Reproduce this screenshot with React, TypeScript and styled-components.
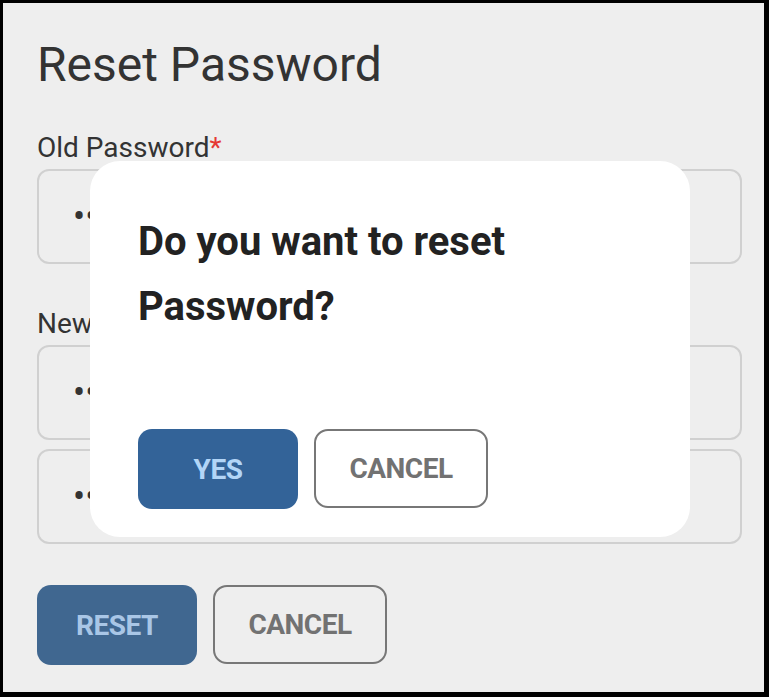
import React from "react";
import styled, { createGlobalStyle } from "styled-components";

const Global = createGlobalStyle`
  html, body { margin: 0; padding: 0; background: #000; }
  body { font-family: Roboto, "Noto Sans", Arial, sans-serif; }
  * { box-sizing: border-box; }
`;

const Frame = styled.div`
  position: relative;
  width: 769px;
  height: 697px;
  background: #eeeeee;
  border-style: solid;
  border-color: #000;
  border-width: 3px 5px 5px 3px;
  padding: 0 22px 0 34px;
  display: flex;
  flex-direction: column;
`;

const Title = styled.h1`
  margin: 30px 0 0;
  font-size: 48px;
  font-weight: 400;
  color: #333;
  line-height: 64px;
`;

const Label = styled.label<{ $mt: number }>`
  display: block;
  font-size: 28px;
  color: #333;
  line-height: 32px;
  margin-top: ${(p) => p.$mt}px;
  margin-bottom: 5px;
  white-space: nowrap;
`;

const Star = styled.span`
  color: #e53935;
`;

const Field = styled.input<{ $mb?: number }>`
  display: block;
  width: 100%;
  height: 95px;
  border: 2px solid #d0d0d0;
  border-radius: 12px;
  background: transparent;
  padding: 0 34px;
  font-size: 36px;
  color: #333;
  outline: none;
  font-family: inherit;
  margin-bottom: ${(p) => p.$mb ?? 0}px;
`;

const ButtonRow = styled.div<{ $mt?: number }>`
  display: flex;
  gap: 16px;
  margin-top: ${(p) => p.$mt ?? 0}px;
`;

const Primary = styled.button<{ $muted?: boolean }>`
  width: 160px;
  height: 80px;
  border: none;
  border-radius: 14px;
  background: ${(p) => (p.$muted ? "#406790" : "#336398")};
  color: ${(p) => (p.$muted ? "#a9c6e6" : "#b2d5f7")};
  font-family: inherit;
  font-weight: 700;
  font-size: 28px;
  letter-spacing: -0.5px;
  cursor: pointer;
`;

const Secondary = styled.button<{ $white?: boolean }>`
  width: 174px;
  height: 79px;
  border: 2px solid #777;
  border-radius: 14px;
  background: ${(p) => (p.$white ? "#fff" : "transparent")};
  color: #727272;
  font-family: inherit;
  font-weight: 700;
  font-size: 28px;
  letter-spacing: -0.5px;
  cursor: pointer;
`;

const Modal = styled.div`
  position: absolute;
  left: 87px;
  top: 158px;
  width: 600px;
  height: 376px;
  background: #fff;
  border-radius: 30px;
  padding: 48px 48px 28px 48px;
  display: flex;
  flex-direction: column;
  justify-content: space-between;
`;

const ModalText = styled.p`
  margin: 0;
  font-size: 40px;
  font-weight: 700;
  line-height: 65px;
  color: #222;
  width: 420px;
`;

export default function App() {
  return (
    <>
      <Global />
      <Frame>
        <Title>Reset Password</Title>
        <Label $mt={35}>
          Old Password<Star>*</Star>
        </Label>
        <Field type="password" defaultValue="password" readOnly />
        <Label $mt={44}>New Password<Star>*</Star></Label>
        <Field type="password" defaultValue="password" readOnly $mb={9} />
        <Field type="password" defaultValue="password" readOnly />
        <ButtonRow $mt={41}>
          <Primary $muted>RESET</Primary>
          <Secondary>CANCEL</Secondary>
        </ButtonRow>
        <Modal role="dialog">
          <ModalText>Do you want to reset Password?</ModalText>
          <ButtonRow>
            <Primary>YES</Primary>
            <Secondary $white>CANCEL</Secondary>
          </ButtonRow>
        </Modal>
      </Frame>
    </>
  );
}
